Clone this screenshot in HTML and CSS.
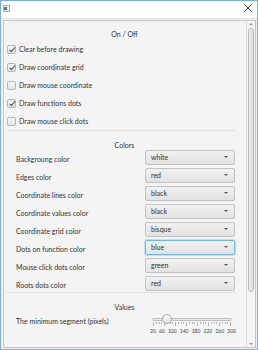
FILE: index.html
```html
<!DOCTYPE html>
<html lang="en">
<head>
  <meta charset="UTF-8">
  <title>Settings</title>
  <link rel="stylesheet" href="styles.css">
</head>
<body>

  <div class="window">
    <div class="titlebar">
      <svg class="app-icon" width="7" height="7" viewBox="0 0 7 7">
        <rect x="0.5" y="0.5" width="6" height="6" fill="#e8eef2" stroke="#9fb4c0"/>
        <rect x="1" y="2" width="3" height="3" fill="#3f8a6a"/>
      </svg>
      <svg class="close" width="8" height="8" viewBox="0 0 8 8">
        <path d="M0.5 0.5 L7.5 7.5 M7.5 0.5 L0.5 7.5" stroke="#333" stroke-width="1"/>
      </svg>
    </div>

    <div class="content">
      <div class="scroll-pane">
        <div class="viewport">

          <p class="section-title">On / Off</p>
          <div class="checks">
            <label class="check"><span class="box checked"></span>Clear before drawing</label>
            <label class="check"><span class="box checked"></span>Draw coordinate grid</label>
            <label class="check"><span class="box"></span>Draw mouse coordinate</label>
            <label class="check"><span class="box checked"></span>Draw functions dots</label>
            <label class="check"><span class="box"></span>Draw mouse click dots</label>
          </div>

          <div class="separator"></div>

          <p class="section-title">Colors</p>
          <div class="grid">
            <span class="label">Backgroung color</span>
            <div class="combo">white</div>
            <span class="label">Edges color</span>
            <div class="combo">red</div>
            <span class="label">Coordinate lines color</span>
            <div class="combo">black</div>
            <span class="label">Coordinate values color</span>
            <div class="combo">black</div>
            <span class="label">Coordinate grid color</span>
            <div class="combo">bisque</div>
            <span class="label">Dots on function color</span>
            <div class="combo focused">blue</div>
            <span class="label">Mouse click dots color</span>
            <div class="combo">green</div>
            <span class="label">Roots dots color</span>
            <div class="combo">red</div>
          </div>

          <div class="separator"></div>

          <p class="section-title">Values</p>
          <div class="value-row">
            <span class="label">The minimum segment (pixels)</span>
            <div class="slider">
              <div class="track"><span class="thumb"></span></div>
              <svg class="ticks" width="82" height="4" viewBox="0 0 82 4">
                <g stroke="#b5b5b5" stroke-width="1">
                  <path d="M1.5 0 V4 M12.5 0 V4 M23.5 0 V4 M34.5 0 V4 M45.5 0 V4 M56.5 0 V4 M67.5 0 V4 M78.5 0 V4"/>
                  <path d="M4.5 0 V2 M7.5 0 V2 M9.5 0 V2 M15.5 0 V2 M18.5 0 V2 M20.5 0 V2 M26.5 0 V2 M29.5 0 V2 M31.5 0 V2 M37.5 0 V2 M40.5 0 V2 M42.5 0 V2 M48.5 0 V2 M51.5 0 V2 M53.5 0 V2 M59.5 0 V2 M62.5 0 V2 M64.5 0 V2 M70.5 0 V2 M73.5 0 V2 M75.5 0 V2"/>
                </g>
              </svg>
              <div class="tick-labels">
                <span>20</span><span>60</span><span>100</span><span>140</span><span>180</span><span>220</span><span>260</span><span>300</span>
              </div>
            </div>
          </div>

        </div>
        <div class="scrollbar">
          <span class="arrow up"></span>
          <span class="thumb-v"></span>
          <span class="arrow down"></span>
        </div>
      </div>
    </div>
  </div>

</body>
</html>
```

FILE: styles.css
```css
* { margin: 0; padding: 0; box-sizing: border-box; }

body {
  font-family: Lato, 'Open Sans', sans-serif;
  font-size: 7px;
  color: #333;
  background: #fff;
}

.window {
  width: 258px;
  height: 350px;
  border: 1px solid #7ab0e0;
  display: flex;
  flex-direction: column;
}

.titlebar {
  height: 17px;
  background: white;
  display: flex;
  align-items: center;
  justify-content: space-between;
  padding: 0 5px 3px 2px;
}

.content {
  flex: 1;
  background: #f2f2f2;
  border-top: 1px solid #e2e2e2;
  padding: 1px 1px 1px 2px;
  display: flex;
}

.scroll-pane {
  flex: 1;
  border: 1px solid #c6c6c6;
  display: flex;
  background: #f4f4f4;
}

.viewport {
  flex: 1;
  padding: 8px 11px 0 0;
  overflow: hidden;
}

.section-title {
  height: 10px;
  line-height: 10px;
  text-align: center;
  padding-left: 10px;
}

.checks {
  display: flex;
  flex-direction: column;
  gap: 8px;
  margin-top: 5px;
  padding-left: 3px;
}

.check {
  display: flex;
  align-items: center;
  height: 10px;
  gap: 3px;
}

.box {
  width: 9px;
  height: 9px;
  border: 1px solid #b4b4b4;
  border-radius: 2px;
  background: linear-gradient(#f6f6f6, #e4e4e4);
  position: relative;
}

.box.checked::after {
  content: '';
  position: absolute;
  left: 2.5px;
  top: 0.5px;
  width: 2px;
  height: 4.5px;
  border: solid #444;
  border-width: 0 1px 1px 0;
  transform: rotate(40deg);
}

.separator {
  height: 1px;
  background: #e0e0e0;
  margin: 4px 0 0 2px;
}

.section-title + .grid {
  margin-top: 0;
}

.separator + .section-title {
  margin-top: 9px;
}

.grid {
  display: grid;
  grid-template-columns: 1fr 90px;
  grid-auto-rows: 15px;
  row-gap: 3px;
  padding-left: 12px;
}

.grid + .separator {
  margin-top: 1px;
}

.label {
  display: flex;
  align-items: center;
  padding-top: 3px;
}

.combo {
  border: 1px solid #c2c2c2;
  border-radius: 2px;
  background: linear-gradient(#f1f1f1, #e2e2e2);
  padding-left: 5px;
  line-height: 13px;
  position: relative;
}

.combo::after {
  content: '';
  position: absolute;
  right: 6px;
  top: 5px;
  border-left: 2px solid transparent;
  border-right: 2px solid transparent;
  border-top: 2.5px solid #555;
}

.combo.focused {
  border-color: #6fb6e8;
  box-shadow: 0 0 0 1px #bfe0f6;
}

.value-row {
  display: grid;
  grid-template-columns: 1fr 90px;
  padding-left: 12px;
  margin-top: 1px;
}

.value-row .label {
  align-items: flex-start;
  padding-top: 4px;
}

.slider {
  padding: 5px 0 0 7px;
}

.track {
  width: 80px;
  height: 3px;
  border: 1px solid #bdbdbd;
  border-radius: 2px;
  background: #e9e9e9;
  position: relative;
}

.thumb {
  position: absolute;
  left: 9px;
  top: -5px;
  width: 10px;
  height: 10px;
  border-radius: 50%;
  border: 1px solid #a8a8a8;
  background: linear-gradient(#fafafa, #e2e2e2);
}

.ticks {
  display: block;
  margin-top: 1px;
}

.tick-labels {
  display: flex;
  justify-content: space-between;
  width: 86px;
  margin: 2px 0 0 -2px;
  font-size: 5px;
  color: #444;
}

.scrollbar {
  width: 9px;
  border-left: 1px solid #dcdcdc;
  display: flex;
  flex-direction: column;
  align-items: center;
  padding: 2px 0;
}

.arrow {
  width: 0;
  height: 0;
  border-left: 2px solid transparent;
  border-right: 2px solid transparent;
}

.arrow.up { border-bottom: 2px solid #9a9a9a; margin-bottom: 3px; }
.arrow.down { border-top: 2px solid #9a9a9a; margin-top: auto; }

.thumb-v {
  width: 6px;
  height: 264px;
  border: 1px solid #bababa;
  border-radius: 3px;
  background: linear-gradient(90deg, #eeeeee, #dadada);
}
```
